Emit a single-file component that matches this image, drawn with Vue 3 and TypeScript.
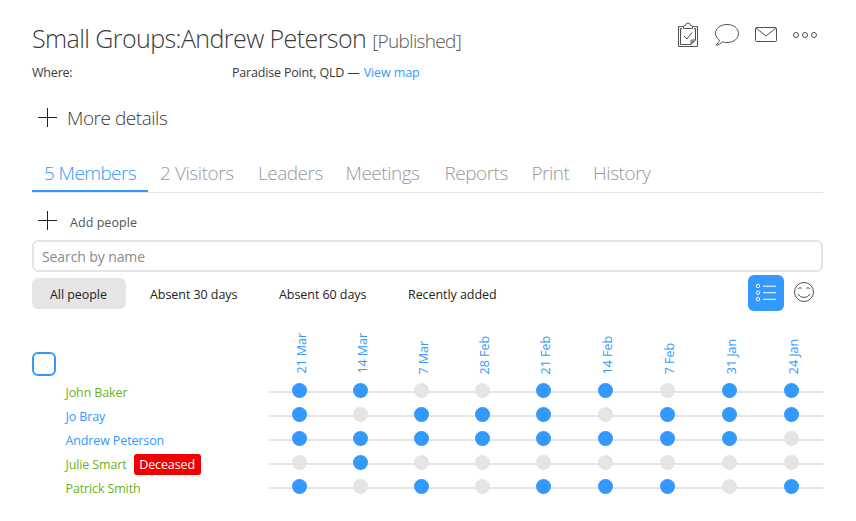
<script setup lang="ts">
import { ref } from 'vue'

interface Tab { id: string; label: string }
interface Person { name: string; tone: 'visitor' | 'member'; badge?: string; attended: number[] }

const tabs: Tab[] = [
  { id: 'members', label: '5 Members' },
  { id: 'visitors', label: '2 Visitors' },
  { id: 'leaders', label: 'Leaders' },
  { id: 'meetings', label: 'Meetings' },
  { id: 'reports', label: 'Reports' },
  { id: 'print', label: 'Print' },
  { id: 'history', label: 'History' },
]
const activeTab = ref('members')

const filters: Tab[] = [
  { id: 'all', label: 'All people' },
  { id: 'd30', label: 'Absent 30 days' },
  { id: 'd60', label: 'Absent 60 days' },
  { id: 'recent', label: 'Recently added' },
]
const activeFilter = ref('all')

const dates: string[] = ['21 Mar', '14 Mar', '7 Mar', '28 Feb', '21 Feb', '14 Feb', '7 Feb', '31 Jan', '24 Jan']
const people: Person[] = [
  { name: 'John Baker', tone: 'visitor', attended: [1, 1, 0, 0, 1, 1, 0, 1, 1] },
  { name: 'Jo Bray', tone: 'member', attended: [1, 0, 1, 1, 1, 0, 1, 1, 1] },
  { name: 'Andrew Peterson', tone: 'member', attended: [1, 1, 1, 1, 1, 1, 1, 1, 0] },
  { name: 'Julie Smart', tone: 'visitor', badge: 'Deceased', attended: [0, 1, 0, 0, 0, 0, 0, 0, 0] },
  { name: 'Patrick Smith', tone: 'visitor', attended: [1, 0, 1, 0, 1, 1, 1, 0, 1] },
]
</script>

<template>
  <main class="page">
    <header class="head">
      <h1><span class="title">Small Groups:Andrew Peterson</span><span class="status">[Published]</span></h1>
      <div class="actions">
        <svg width="22" height="26" viewBox="0 0 22 26">
          <path d="M6.5 4.5H1.500V24.500H20.500V4.500H15.500" />
          <path d="M5 6.500H3.500V22.500H14L18.500 18V6.500H17" />
          <path d="M14 22.500V18H18.500M15.500 21V19.500H17" />
          <path d="M6.500 6.500V4.500Q6.500 3.500 8 3.500H8.500Q9 1 11 1T13.500 3.500H14Q15.500 3.500 15.500 4.500V6.500Z" />
          <path d="M7 14L10 17L15 10.500" />
        </svg>
        <svg width="26" height="24" viewBox="0 0 26 24">
          <path d="M5.500 17.200C3 15.500 1.500 13 1.500 10.500C1.500 5.200 6.600 1.500 13 1.500S24.500 5.200 24.500 10.500S19.400 19.500 13 19.500C11.300 19.500 9.800 19.300 8.500 18.800C6.700 20.700 4.500 21.800 2 22.300C3.700 20.500 4.900 19 5.500 17.200Z" />
        </svg>
        <svg width="24" height="18" viewBox="0 0 24 18">
          <rect x="1.500" y="1.500" width="21" height="14" rx="1" />
          <path d="M2 2L12 10L22 2" />
        </svg>
        <svg width="26" height="8" viewBox="0 0 26 8">
          <circle cx="4" cy="4" r="2.500" /><circle cx="13" cy="4" r="2.500" /><circle cx="22" cy="4" r="2.500" />
        </svg>
      </div>
    </header>

    <dl class="where">
      <dt>Where:</dt>
      <dd><span class="place">Paradise Point, QLD —</span><a class="map">View map</a></dd>
    </dl>

    <button class="plus more">
      <svg width="20" height="20" viewBox="0 0 20 20"><path d="M9.500 0V19M0 9.500H19" /></svg>
      <span>More details</span>
    </button>

    <nav class="tabs">
      <a v-for="t in tabs" :key="t.id" :class="['tab', t.id, { active: activeTab === t.id }]" @click="activeTab = t.id"><span>{{ t.label }}</span></a>
    </nav>

    <button class="plus add">
      <svg width="20" height="20" viewBox="0 0 20 20"><path d="M9.500 0V19M0 9.500H19" /></svg>
      <span>Add people</span>
    </button>

    <input class="search" type="text" placeholder="Search by name" />

    <div class="toolbar">
      <div class="filters">
        <button v-for="f in filters" :key="f.id" :class="['filter', f.id, { on: activeFilter === f.id }]" @click="activeFilter = f.id">{{ f.label }}</button>
      </div>
      <div class="views">
        <button class="list-view">
          <svg width="24" height="24" viewBox="0 0 24 24">
            <circle cx="4" cy="5" r="1.700" /><circle cx="4" cy="11.700" r="1.700" /><circle cx="4" cy="18.200" r="1.700" />
            <path d="M9 5.200H22M9 11.700H22M9 18.300H22" />
          </svg>
        </button>
        <svg class="smile" width="22" height="22" viewBox="0 0 22 22">
          <circle cx="11" cy="11" r="9.500" />
          <path d="M5.200 7.800Q6.800 5.700 8.700 7.300M13.300 7.300Q15.200 5.700 16.800 7.800M5 13Q7 16.500 11 16.500T17 13" />
        </svg>
      </div>
    </div>

    <section class="attendance">
      <div class="dates-row">
        <div class="lead"><span class="check"></span></div>
        <div class="cols"><div v-for="d in dates" :key="d" class="date"><span>{{ d }}</span></div></div>
      </div>
      <div v-for="p in people" :key="p.name" class="person">
        <div class="who" :class="p.tone"><span class="name">{{ p.name }}</span><span v-if="p.badge" class="badge">{{ p.badge }}</span></div>
        <div class="cols track"><div v-for="(a, i) in p.attended" :key="i" class="cell"><i :class="['dot', { yes: a }]"></i></div></div>
      </div>
    </section>
  </main>
</template>

<style>
body { background: #fff; overflow: hidden; }
</style>

<style scoped>
* { box-sizing: border-box; }
.page { width: 856px; height: 521px; padding: 20px 33px 0 32px; font: 400 12.5px/24px "Open Sans", "Noto Sans", sans-serif; color: #3a3a3a; }
svg { display: block; fill: none; stroke: #505050; stroke-width: 1; flex: none; }
button { border: 0; background: none; padding: 0; margin: 0; font: inherit; color: inherit; text-align: left; }
.head { display: flex; justify-content: space-between; height: 41px; }
h1 { margin: 0; font-weight: 300; line-height: 36px; white-space: nowrap; }
.title { font-size: 25px; letter-spacing: -0.58px; }
.status { font-size: 19px; letter-spacing: -0.65px; margin-left: 6px; color: #555; }
.actions { display: flex; align-items: center; height: 30px; gap: 14px; padding-right: 5px; }
.actions svg:first-child { margin-right: 1px; }
.where { display: flex; margin: 0; height: 24px; line-height: 24px; }
.where dt { width: 200px; letter-spacing: -0.2px; }
.where dd { margin: 0; }
.place { margin-right: 4px; letter-spacing: -0.18px; }
.map { color: #39f; letter-spacing: -0.1px; }
.plus { display: flex; align-items: center; padding-left: 6px; }
.plus svg { stroke: #222; }
.more { height: 30px; margin-top: 18px; font-size: 19px; font-weight: 300; }
.more span { margin-left: 9px; letter-spacing: -0.47px; }
.tabs { display: flex; height: 38px; margin-top: 22px; border-bottom: 1px solid #e5e5e5; font-size: 19px; font-weight: 300; line-height: 36px; color: #999; letter-spacing: -0.5px; }
.tab { padding-left: 12px; height: 37px; white-space: nowrap; }
.tab.active { color: #39f; border-bottom: 2px solid #39f; }
.members { width: 116px; letter-spacing: -0.6px; }
.visitors { width: 98px; letter-spacing: -0.42px; }
.leaders { width: 87.5px; }
.meetings { width: 99px; }
.reports { width: 87px; }
.print { width: 61.5px; }
.history { letter-spacing: -0.4px; }
.add { height: 24px; margin-top: 16px; }
.add span { margin: 3px 0 0 12px; letter-spacing: 0.05px; color: #555; }
.search { display: block; width: 791px; height: 32px; margin-top: 7px; padding: 0 8px; border: 2px solid #e5e5e5; border-radius: 6px; font: 400 14px/20px "Open Sans", sans-serif; letter-spacing: -0.1px; outline: 0; }
.search::placeholder { color: #8a8a8a; opacity: 1; }
.toolbar { display: flex; justify-content: space-between; height: 44px; padding-top: 3px; }
.filters { display: flex; padding-top: 3px; color: #222; }
.filter { height: 31px; padding: 3px 0 0 18px; border-radius: 6px; letter-spacing: -0.06px; }
.filter.on { background: #e5e5e5; }
.all { width: 94px; margin-right: 6px; }
.d30, .d60 { width: 129px; }
.views { display: flex; padding-right: 8px; gap: 9px; }
.list-view { display: grid; place-items: center; width: 36px; height: 36px; border-radius: 6px; background: #39f; }
.list-view svg { stroke: #fff; }
.smile { margin-top: 6px; }
.attendance { margin-top: 4px; }
.dates-row { display: flex; height: 60px; }
.lead, .who { width: 237px; flex: none; }
.lead { padding-top: 32px; }
.check { display: block; width: 24px; height: 24px; border: 2px solid #39f; border-radius: 6px; }
.cols { display: grid; grid-template-columns: repeat(5, 61px) repeat(4, 62px); width: 554px; }
.date { display: flex; align-items: flex-end; justify-content: center; padding: 0 0 6px 5px; }
.date span { writing-mode: vertical-rl; transform: rotate(180deg); line-height: 20px; color: #39f; letter-spacing: -0.05px; }
.person { display: flex; height: 24px; }
.who { display: flex; align-items: center; padding-left: 33.5px; letter-spacing: -0.13px; }
.name { padding-top: 2px; }
.who.visitor { color: #6ab220; }
.who.member { color: #39f; }
.badge { margin: 1px 0 0 7px; width: 67px; height: 21px; line-height: 21px; border-radius: 3px; background: #f00000; color: #fff; text-align: center; }
.track { background: linear-gradient(#e5e5e5, #e5e5e5) 0 11px / 100% 2px no-repeat; }
.cell { display: flex; justify-content: center; padding-top: 3px; }
.dot { width: 15px; height: 15px; border-radius: 50%; background: #e5e5e5; }
.dot.yes { background: #39f; }
</style>
